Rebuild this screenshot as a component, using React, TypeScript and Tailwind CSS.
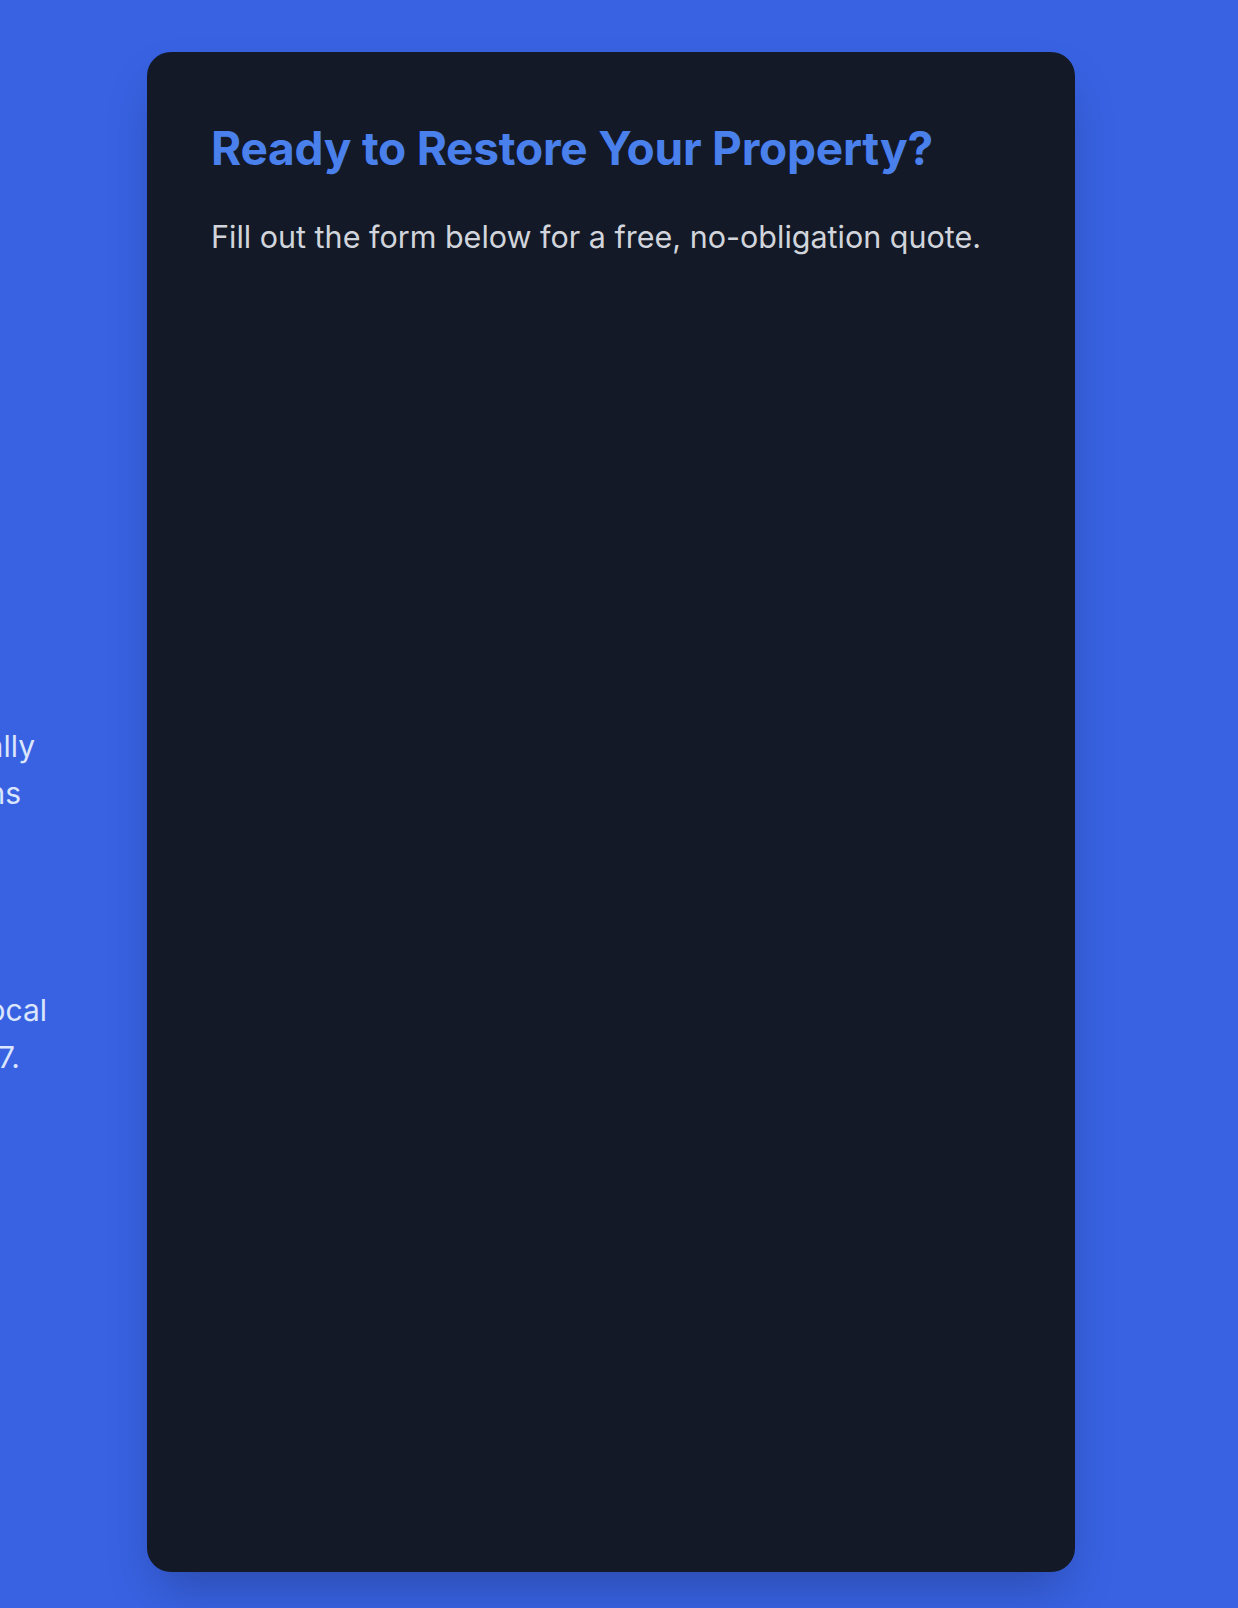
export default function App() {
  return (
    <div className="min-h-[1608px] w-full overflow-hidden bg-[#3862e2] font-['Inter',sans-serif]">
      <div className="flex pt-[52px]">
        {/* Left column (mostly off-screen) */}
        <div className="w-[147px] shrink-0 text-[30px] leading-[47px] text-[#dbe5fc]">
          <div className="mt-[671px]">
            <div className="flex justify-end whitespace-nowrap pr-[112px]">
              <span>Our team is certified and professionally</span>
            </div>
            <div className="flex justify-end whitespace-nowrap pr-[126px]">
              <span>trained restoration technicians</span>
            </div>
          </div>
          <div className="mt-[170px]">
            <div className="flex justify-end whitespace-nowrap pr-[100px]">
              <span>Proudly serving your community as a trusted local</span>
            </div>
            <div className="flex justify-end whitespace-nowrap pr-[127px]">
              <span>company, available 24/7.</span>
            </div>
          </div>
        </div>

        {/* Quote card */}
        <div className="h-[1520px] w-[928px] shrink-0 rounded-3xl bg-[#131927] p-16 shadow-2xl">
          <h2 className="text-[46px] font-bold leading-[64px] tracking-[-0.005em] text-[#4a80ec]">
            Ready to Restore Your Property?
          </h2>
          <p className="mt-[39px] text-[30.5px] leading-9 text-[#d1d5db]">
            Fill out the form below for a free, no-obligation quote.
          </p>
        </div>
      </div>
    </div>
  )
}
